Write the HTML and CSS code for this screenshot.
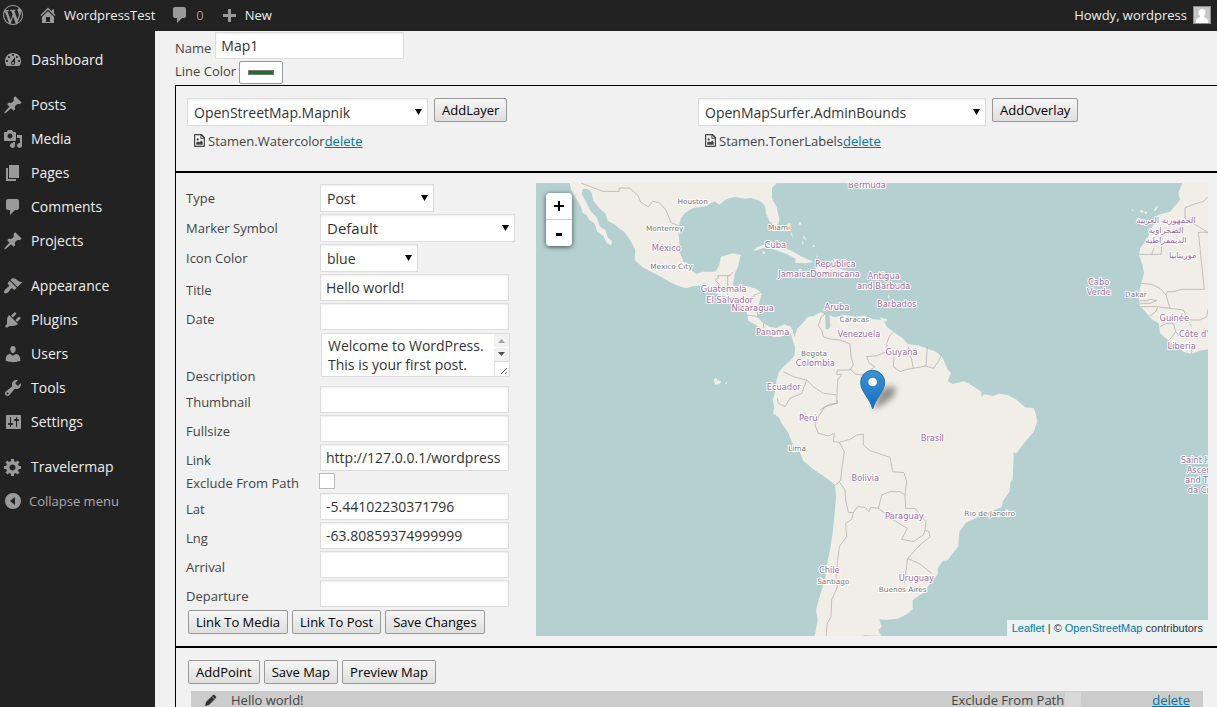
FILE: index.html
```html
<!DOCTYPE html>
<html lang="en">
<head>
<meta charset="utf-8">
<title>Travelermap - WordpressTest</title>
<link rel="stylesheet" href="styles.css">
</head>
<body>
<header class="adminbar">
  <a class="bar-item bar-logo" href="#" aria-label="About WordPress"><svg class="icon" viewBox="0 0 20 20"><path d="M20 10c0-5.51-4.49-10-10-10C4.48 0 0 4.49 0 10c0 5.52 4.48 10 10 10 5.51 0 10-4.48 10-10zM7.78 15.37L4.37 6.22c.55-.02 1.17-.08 1.17-.08.5-.06.44-1.13-.06-1.11 0 0-1.45.11-2.37.11-.18 0-.37 0-.58-.01C4.12 2.69 6.87 1.11 10 1.11c2.33 0 4.45.87 6.05 2.34-.68-.11-1.65.39-1.65 1.58 0 .74.45 1.36.9 2.1.35.61.55 1.36.55 2.46 0 1.49-1.4 5-1.4 5l-3.03-8.37c.54-.02.82-.17.82-.17.5-.05.44-1.25-.06-1.22 0 0-1.44.12-2.38.12-.87 0-2.33-.12-2.33-.12-.5-.03-.56 1.2-.06 1.22l.92.08 1.26 3.41zM17.41 10c.24-.64.74-1.87.43-4.25.7 1.29 1.05 2.71 1.05 4.25 0 3.29-1.73 6.24-4.4 7.78.97-2.59 1.94-5.2 2.92-7.78zM6.1 18.09C3.12 16.65 1.11 13.53 1.11 10c0-1.3.23-2.48.72-3.59C3.25 10.3 4.67 14.2 6.1 18.09zm4.03-6.63l2.58 6.98c-.86.29-1.76.45-2.71.45-.79 0-1.57-.11-2.29-.33.81-2.38 1.62-4.74 2.42-7.1z"/></svg></a>
  <a class="bar-item" href="#"><svg class="icon" viewBox="0 0 20 20"><path fill-rule="evenodd" d="M16 8.5l1.53 1.53-1.06 1.06L10 4.6l-6.47 6.49-1.06-1.06L10 2.5l4 4v-2h2v4zm-6-2.46l6 5.99V18H4v-5.97zM12 17v-5H8v5h4z"/></svg>WordpressTest</a>
  <a class="bar-item bar-muted" href="#"><svg class="icon" viewBox="0 0 20 20"><path d="M5 2h9c1.1 0 2 .9 2 2v7c0 1.1-.9 2-2 2h-2l-5 5v-5H5c-1.1 0-2-.9-2-2V4c0-1.1.9-2 2-2z"/></svg>0</a>
  <a class="bar-item" href="#"><svg class="icon" viewBox="0 0 20 20"><path d="M17 9v3h-5v5H9v-5H4V9h5V4h3v5h5z"/></svg>New</a>
  <a class="bar-item bar-user" href="#">Howdy, wordpress<svg class="avatar" viewBox="0 0 18 18"><rect width="18" height="18" fill="#8c8c8c"/><rect x="1" y="1" width="16" height="16" fill="#c6c6c6"/><path fill="#fff" d="M9 3c2.200 0 3.500 1.600 3.500 3.600 0 1.500-.7 2.700-1.500 3.500v1c1 .8 3.500 1.200 4 3.400V17H3v-2.500c.5-2.200 3-2.600 4-3.400v-1C6.200 9.300 5.500 8.100 5.500 6.600 5.500 4.600 6.800 3 9 3z"/></svg></a>
</header>

<div class="shell">
<nav class="menu" aria-label="Main menu">
  <ul class="menu-list">
    <li><a href="#"><svg class="icon" viewBox="0 0 20 20"><path fill-rule="evenodd" d="M3.760 16h12.480c1.100-1.370 1.760-3.110 1.760-5 0-4.420-3.580-8-8-8s-8 3.580-8 8c0 1.890.66 3.630 1.760 5zM10 4c.55 0 1 .45 1 1s-.45 1-1 1-1-.45-1-1 .45-1 1-1zM6 6c.55 0 1 .45 1 1s-.45 1-1 1-1-.45-1-1 .45-1 1-1zm8 0c.55 0 1 .45 1 1s-.45 1-1 1-1-.45-1-1 .45-1 1-1zm-5.370 5.550L12 7v6c0 1.100-.9 2-2 2s-2-.9-2-2c0-.57.24-1.080.63-1.450zM4 10c.55 0 1 .45 1 1s-.45 1-1 1-1-.45-1-1 .45-1 1-1zm12 0c.55 0 1 .45 1 1s-.45 1-1 1-1-.45-1-1 .45-1 1-1zm-5 3c0-.55-.45-1-1-1s-1 .45-1 1 .45 1 1 1 1-.45 1-1z"/></svg>Dashboard</a></li>
    <li class="group"><a href="#"><svg class="icon" viewBox="0 0 20 20"><path d="M10.440 3.020l1.820-1.820 6.360 6.350-1.830 1.820c-1.050-.68-2.480-.57-3.410.36l-.75.75c-.92.93-1.040 2.350-.35 3.410l-1.830 1.820-2.410-2.410-2.800 2.790c-.42.42-3.380 2.710-3.800 2.290s1.860-3.390 2.280-3.810l2.790-2.790L4.100 9.360l1.830-1.820c1.050.69 2.480.57 3.400-.36l.75-.75c.93-.92 1.050-2.350.36-3.410z"/></svg>Posts</a></li>
    <li><a href="#"><svg class="icon" viewBox="0 0 20 20"><path fill-rule="evenodd" d="M13 11V4c0-.55-.45-1-1-1h-1.670L9 1H5L3.670 3H2c-.55 0-1 .45-1 1v7c0 .55.45 1 1 1h10c.55 0 1-.45 1-1zM7 4.500c1.380 0 2.500 1.120 2.500 2.500S8.380 9.500 7 9.500 4.500 8.380 4.500 7 5.620 4.500 7 4.500zM14 6h5v10.500c0 1.380-1.120 2.500-2.500 2.500S14 17.880 14 16.500s1.120-2.500 2.500-2.500c.17 0 .34.020.5.050V9h-3V6zm-4 8.050V13h2v3.500c0 1.380-1.120 2.500-2.500 2.500S7 17.880 7 16.500 8.120 14 9.500 14c.17 0 .34.020.5.050z"/></svg>Media</a></li>
    <li><a href="#"><svg class="icon" viewBox="0 0 20 20"><path d="M6 15V2h10v13H6zm-1 1h8v2H3V5h2v11z"/></svg>Pages</a></li>
    <li><a href="#"><svg class="icon" viewBox="0 0 20 20"><path d="M5 2h9c1.100 0 2 .9 2 2v7c0 1.100-.9 2-2 2h-2l-5 5v-5H5c-1.100 0-2-.9-2-2V4c0-1.100.9-2 2-2z"/></svg>Comments</a></li>
    <li><a href="#"><svg class="icon" viewBox="0 0 20 20"><path d="M10.440 3.020l1.820-1.820 6.360 6.350-1.830 1.820c-1.050-.68-2.480-.57-3.410.36l-.75.75c-.92.93-1.040 2.350-.35 3.410l-1.830 1.820-2.410-2.410-2.800 2.790c-.42.42-3.380 2.710-3.800 2.290s1.860-3.390 2.280-3.810l2.790-2.790L4.100 9.360l1.830-1.820c1.050.69 2.480.57 3.400-.36l.75-.75c.93-.92 1.050-2.350.36-3.410z"/></svg>Projects</a></li>
    <li class="group"><a href="#"><svg class="icon" viewBox="0 0 20 20"><path d="M14.480 11.060L7.410 3.990l1.500-1.500c.5-.56 2.300-.47 3.510.32 1.210.8 1.430 1.280 2.910 2.100 1.180.64 2.450 1.260 4.450.85zm-.71.71L6.700 4.700 4.930 6.470c-.39.39-.39 1.020 0 1.410l1.060 1.060c.39.39.39 1.030 0 1.420-.6.6-1.430 1.110-2.210 1.690-.35.26-.7.53-1.010.84C1.430 14.230.4 16.080 1.400 17.070c.99 1 2.840-.03 4.180-1.360.31-.31.58-.66.85-1.020.57-.78 1.080-1.610 1.690-2.210.39-.39 1.020-.39 1.410 0l1.060 1.060c.39.39 1.020.39 1.410 0z"/></svg>Appearance</a></li>
    <li><a href="#"><svg class="icon" viewBox="0 0 20 20"><path d="M13.110 4.360L9.870 7.600 8 5.730l3.240-3.240c.35-.34 1.050-.2 1.560.32.52.51.66 1.210.31 1.550zm-8 1.770l.91-1.120 9.010 9.010-1.190.84c-.71.71-2.630 1.160-3.820 1.160H6.140L4.900 17.260c-.59.59-1.540.59-2.120 0-.59-.58-.59-1.530 0-2.120l1.240-1.240v-3.880c0-1.130.4-3.190 1.090-3.890zm7.260 3.970l3.240-3.240c.34-.35 1.040-.21 1.550.31.52.51.66 1.210.31 1.550l-3.240 3.250z"/></svg>Plugins</a></li>
    <li><a href="#"><svg class="icon" viewBox="0 0 20 20"><path d="M10 9.250c-2.270 0-2.730-3.440-2.730-3.440C7 4.020 7.820 2 9.970 2c2.160 0 2.980 2.020 2.710 3.810 0 0-.41 3.440-2.680 3.440zm0 2.570L12.720 10c2.390 0 4.520 2.330 4.520 4.530v2.490s-3.650 1.130-7.240 1.130c-3.650 0-7.240-1.130-7.240-1.130v-2.490c0-2.250 1.940-4.480 4.470-4.480z"/></svg>Users</a></li>
    <li><a href="#"><svg class="icon" viewBox="0 0 20 20"><path fill-rule="evenodd" d="M16.680 9.770c-1.340 1.340-3.300 1.670-4.950.99l-5.410 6.520c-.99.99-2.590.99-3.580 0s-.99-2.590 0-3.570l6.520-5.420c-.68-1.650-.35-3.610.99-4.950 1.280-1.280 3.120-1.620 4.720-1.060l-2.890 2.890 2.820 2.820 2.860-2.870c.53 1.580.18 3.390-1.080 4.650zM3.810 16.210c.4.39 1.040.39 1.430 0 .4-.4.4-1.040 0-1.430-.39-.4-1.030-.4-1.430 0-.39.39-.39 1.030 0 1.430z"/></svg>Tools</a></li>
    <li><a href="#"><svg class="icon" viewBox="0 0 20 20"><path fill-rule="evenodd" d="M18 16V4c0-.55-.45-1-1-1H4c-.55 0-1 .45-1 1v12c0 .55.45 1 1 1h13c.55 0 1-.45 1-1zM8 11h1c.55 0 1 .45 1 1s-.45 1-1 1H8v1.500c0 .28-.22.5-.5.5s-.5-.22-.5-.5V13H6c-.55 0-1-.45-1-1s.45-1 1-1h1V5.500c0-.28.22-.5.5-.5s.5.22.5.5V11zm5-2h-1c-.55 0-1-.45-1-1s.45-1 1-1h1V5.500c0-.28.22-.5.5-.5s.5.22.5.5V7h1c.55 0 1 .45 1 1s-.45 1-1 1h-1v5.500c0 .28-.22.5-.5.5s-.5-.22-.5-.5V9z"/></svg>Settings</a></li>
    <li class="group"><a href="#"><svg class="icon" viewBox="0 0 20 20"><path fill-rule="evenodd" d="M18 12h-2.180c-.17.7-.44 1.350-.81 1.930l1.540 1.540-2.100 2.100-1.540-1.540c-.58.36-1.230.63-1.910.79V19H8v-2.180c-.68-.16-1.330-.43-1.910-.79l-1.540 1.540-2.120-2.120 1.540-1.540c-.36-.58-.63-1.230-.79-1.910H1V9.030h2.170c.16-.7.44-1.350.8-1.940L2.430 5.550l2.100-2.100 1.540 1.540c.58-.37 1.240-.64 1.930-.81V2h3v2.180c.68.16 1.330.43 1.910.79l1.540-1.540 2.120 2.120-1.540 1.540c.36.59.64 1.240.8 1.940H18V12zm-8.500 1.500c1.660 0 3-1.340 3-3s-1.340-3-3-3-3 1.340-3 3 1.340 3 3 3z"/></svg>Travelermap</a></li>
  </ul>
  <button class="collapse" type="button"><svg class="icon" viewBox="0 0 20 20"><path fill-rule="evenodd" d="M10 2a8 8 0 1 0 0 16 8 8 0 0 0 0-16zM12 14V6l-5 4z"/></svg>Collapse menu</button>
</nav>

<main class="content">
  <div class="head-row"><label for="map-name">Name</label><input class="text" id="map-name" type="text" value="Map1"></div>
  <div class="head-row head-color"><label for="line-color">Line Color</label><input class="color" id="line-color" type="color" value="#147528"></div>

  <section class="panel layers">
    <div class="layer-col">
      <div class="layer-pick">
        <span class="pick pick-layer"><select aria-label="Layer"><option>OpenStreetMap.Mapnik</option></select></span>
        <button class="btn" type="button">AddLayer</button>
      </div>
      <div class="layer"><svg class="file" viewBox="0 0 12 14"><path fill="#444" fill-rule="evenodd" d="M1 0h7.500L12 3.500V13a1 1 0 0 1-1 1H1a1 1 0 0 1-1-1V1a1 1 0 0 1 1-1zm.3 1.300v11.400h9.400V5H7V1.300zM8 1.800V4h2.200z"/><path fill="#444" d="M2.500 11.500V9l2-1 1.500 1 2-2 1.500 1.500v3z"/><circle cx="4" cy="5.800" r="1.200" fill="#444"/></svg><span>Stamen.Watercolor</span><a href="#">delete</a></div>
    </div>
    <div class="layer-col">
      <div class="layer-pick">
        <span class="pick pick-overlay"><select aria-label="Overlay"><option>OpenMapSurfer.AdminBounds</option></select></span>
        <button class="btn" type="button">AddOverlay</button>
      </div>
      <div class="layer"><svg class="file" viewBox="0 0 12 14"><path fill="#444" fill-rule="evenodd" d="M1 0h7.500L12 3.500V13a1 1 0 0 1-1 1H1a1 1 0 0 1-1-1V1a1 1 0 0 1 1-1zm.3 1.300v11.400h9.400V5H7V1.300zM8 1.800V4h2.200z"/><path fill="#444" d="M2.500 11.500V9l2-1 1.500 1 2-2 1.500 1.500v3z"/><circle cx="4" cy="5.800" r="1.200" fill="#444"/></svg><span>Stamen.TonerLabels</span><a href="#">delete</a></div>
    </div>
  </section>

  <section class="panel editor">
    <form class="form">
      <div class="row row-select"><label for="f-type">Type</label><span class="pick pick-type"><select id="f-type"><option>Post</option></select></span></div>
      <div class="row row-select"><label for="f-symbol">Marker Symbol</label><span class="pick pick-symbol"><select id="f-symbol"><option>Default</option></select></span></div>
      <div class="row row-select"><label for="f-color">Icon Color</label><span class="pick pick-color"><select id="f-color"><option>blue</option></select></span></div>
      <div class="row"><label for="f-title">Title</label><input class="text" id="f-title" type="text" value="Hello world!"></div>
      <div class="row"><label for="f-date">Date</label><input class="text" id="f-date" type="text"></div>
      <div class="row row-area"><label for="f-desc">Description</label><span class="area"><textarea id="f-desc" rows="2">Welcome to WordPress. This is your first post.</textarea><svg class="scroller" viewBox="0 0 15 42"><rect width="15" height="42" fill="#f1f1f1"/><path d="M0 13.500h15" stroke="#fff"/><path fill="#a3a3a3" d="M4 9h7L7.500 5z"/><path fill="#505050" d="M4 18h7l-3.500 4z"/><rect y="27" width="15" height="15" fill="#fff"/><path d="M0 27.500h15M.5 27v15" stroke="#ddd"/><path d="M7 40l6-6M11 40l2-2" stroke="#666"/></svg></span></div>
      <div class="row"><label for="f-thumb">Thumbnail</label><input class="text" id="f-thumb" type="text"></div>
      <div class="row"><label for="f-full">Fullsize</label><input class="text" id="f-full" type="text"></div>
      <div class="row"><label for="f-link">Link</label><input class="text" id="f-link" type="text" value="http://127.0.0.1/wordpress"></div>
      <div class="row row-check"><label for="f-exclude">Exclude From Path</label><input class="check" id="f-exclude" type="checkbox"></div>
      <div class="row"><label for="f-lat">Lat</label><input class="text" id="f-lat" type="text" value="-5.44102230371796"></div>
      <div class="row"><label for="f-lng">Lng</label><input class="text" id="f-lng" type="text" value="-63.80859374999999"></div>
      <div class="row"><label for="f-arr">Arrival</label><input class="text" id="f-arr" type="text"></div>
      <div class="row"><label for="f-dep">Departure</label><input class="text" id="f-dep" type="text"></div>
      <div class="buttons"><button class="btn" type="button">Link To Media</button><button class="btn" type="button">Link To Post</button><button class="btn" type="button">Save Changes</button></div>
    </form>

    <div class="map">
      <svg class="map-canvas" viewBox="0 9 2016 1359" preserveAspectRatio="xMinYMin slice" role="img" aria-label="Map of Central and South America">
        <defs>
          <linearGradient id="pin" x1="0" y1="0" x2="0" y2="1"><stop offset="0" stop-color="#3f92cf"/><stop offset="1" stop-color="#126fc6"/></linearGradient>
          <filter id="soft" x="-50%" y="-50%" width="200%" height="200%"><feGaussianBlur stdDeviation="9"/></filter>
        </defs>
        <g class="land">
          <path d="M100 0L105 30 120 55 135 80 140 100 152 105 160 120 175 130 184 155 202 168 213 190 225 196 229 184 215 172 208 150 192 140 182 112 165 95 152 70 137 42 140 28 155 26 167 38 172 62 190 85 208 100 215 122 235 133 248 145 265 155 285 185 298 210 296 240 320 262 345 275 375 290 400 305 425 317 450 325 475 318 495 318 515 330 545 343 575 352 600 365 628 380 632 400 637 422 660 435 680 455 700 463 712 472 735 470 742 458 755 452 765 462 770 480 777 500 776 525 765 540 740 562 728 578 722 600 716 640 710 660 715 680 711 700 728 712 740 735 757 758 767 785 792 818 802 842 832 868 870 893 897 915 900 950 896 1000 890 1060 882 1110 874 1150 868 1195 852 1245 840 1290 845 1320 834 1380H990L982 1365 1035 1368 1027 1350 1037 1340 1030 1318 1050 1320 1085 1316 1112 1303 1130 1288 1130 1260 1160 1240 1188 1204 1202 1188 1217 1150 1235 1140 1267 1098 1270 1055 1290 1028 1312 1018 1362 995 1397 982 1400 965 1420 935 1424 905 1430 898 1432 850 1433 816 1440 821 1470 782 1492 757 1504 725 1499 700 1492 684 1467 682 1440 658 1415 645 1390 641 1370 648 1345 642 1336 652 1336 635 1302 613 1285 604 1250 612 1235 603 1245 580 1235 568 1218 530 1200 515 1150 497 1115 492 1100 475 1072 455 1052 440 1042 420 1010 418 985 407 960 410 925 405 895 412 880 405 882 425 878 440 868 432 868 405 855 396 835 407 815 411 800 430 785 445 777 465 765 440 745 433 720 444 700 440 680 428 665 412 662 400 668 375 678 338 660 326 632 318 600 320 590 315 597 278 606 260 612 235 615 225 590 220 555 230 550 255 538 275 500 275 480 282 463 268 443 245 431 218 430 180 425 148 435 115 448 98 470 85 510 78 535 64 550 74 570 58 598 50 625 56 645 54 672 62 687 78 690 100 700 122 715 136 727 132 730 118 722 82 708 55 708 25 722 9V0z"/>
          <path d="M1942 0L1927 40 1932 60 1902 95 1865 105 1845 150 1832 180 1812 205 1809 225 1818 250 1824 280 1815 312 1808 345 1812 378 1832 400 1847 418 1868 430 1872 460 1902 485 1942 515 1967 522 1990 512 2016 508V0z"/>
          <path d="M652 213L662 202 690 192 722 202 750 206 772 215 797 230 832 246 807 250 777 248 780 236 752 222 712 208 685 203 665 210z"/>
          <path d="M839 258L862 262 900 264 950 275 967 284 930 291 880 288 842 290zM1030 412L1052 418 1052 424 1040 424zM680 214l8 2-3 6-6-2z"/>
          <path d="M533 597l8-3 3 7 12 3-5 8-14 2zM569 607l4 0 0 5-4 0zM763 153l5 8 3 14-5-9zM777 140l5 10M800 165l8 8 3 10-8-8zM840 225l9 10-7-3zM1787 85l6 8-5 0zM1812 92l8-2 2 7-8 1zM1826 95l9 0-4 8-5-2zM1853 92l7-12 8-4-10 17zM1055 350l4-10 1 22z"/>
          <ellipse cx="792" cy="130" rx="3" ry="5"/><ellipse cx="833" cy="198" rx="3" ry="4"/><ellipse cx="800" cy="188" rx="2" ry="5"/>
        </g>
        <path class="water" d="M868 440l6-30 6 0 4 28-6 10-9-2zM1205 1165l16-22 7-2-10 18-12 20z"/>
        <g class="borders">
          <path d="M135 9L200 34H249L250 24H280L305 45 315 68 337 80 350 64 370 68 390 90 405 128 430 138"/>
          <path d="M575 345V287H545L548 293 537 300 555 318M575 287H582L590 276M642 360L655 345 678 337M632 405L655 408 668 412M682 430L684 445"/>
          <path d="M867 402L855 412 847 437 857 450 862 470 882 477 912 480 942 492 945 530 952 555 942 570 904 570 902 583 917 583 905 600 902 670 882 672 852 690M942 565L957 582 977 585 1000 572 1017 560 1000 550 992 530 1022 527 1052 515V490L1062 465 1074 455M1074 530L1072 560 1092 575 1112 568 1132 565 1127 540 1117 500M1132 565L1170 558 1172 525 1174 500M1170 558L1192 565 1207 545 1217 522"/>
          <path d="M742 575L772 590 812 600 832 620 862 640 902 645M812 600L797 640 762 655 747 680 727 670 724 655M904 660V670L867 680 847 710 837 735 847 760 877 768 895 760 892 785 910 787 942 778 962 765 982 763V795L1002 812 1062 832 1070 875 1104 878 1112 905 1107 945"/>
          <path d="M772 455l5 14M910 787L925 815 917 870 914 900 900 915M910 905L927 930 929 960 937 997 952 998 964 980 987 982 999 995 1004 982 1027 985 1037 945 1062 935 1092 935 1107 945 1109 985 1137 985 1152 1005 1170 1025 1167 1050 1162 1065 1132 1085 1097 1078 1114 1045 1072 1020 1027 985M1167 1050L1179 1055 1182 1070 1152 1095 1115 1135 1105 1210M1115 1135L1152 1152 1187 1180"/>
          <path d="M952 998L947 1018 929 1030 932 1070 910 1100 904 1150 900 1200 904 1220 887 1260 885 1310 874 1330 870 1368"/>
          <path d="M2016 50L2002 65 1982 70 1947 83V115L2016 157H1987L2005 328H1937L1914 335H1894L1890 345 1872 325 1847 313 1814 310M1809 223H1876L1877 195M1847 223L1854 205M1890 345L1902 385 1862 380H1814M1812 362H1832L1842 358 1862 362 1842 370H1814M1902 385L1942 390 1952 410 1962 420H1992L2012 410 2016 388M1842 408L1862 392 1864 382M1872 440L1892 430H1912L1919 455 1902 478M1952 415L1967 440M1919 455L1930 470M1967 522V500L1957 490"/>
        </g>
        <g class="towns">
          <text x="470" y="72">Houston</text><text x="386" y="152">Monterrey</text><text x="406" y="267">Mexico City</text><text x="729" y="150">Miami</text><text x="955" y="425">Caracas</text><text x="834" y="527">Bogota</text><text x="1800" y="351">Dakar</text><text x="783" y="813">Lima</text><text x="1361" y="1008">Rio de Janeiro</text><text x="892" y="1212">Santiago</text><text x="1100" y="1236">Buenos Aires</text>
        </g>
        <g class="countries">
          <text x="391" y="212">México</text><text x="563" y="336">Guatemala</text><text x="581" y="368">El Salvador</text><text x="650" y="394">Nicaragua</text><text x="993" y="24">Bermuda</text><text x="718" y="203">Cuba</text><text x="898" y="260">República</text><text x="776" y="291">Jamaica</text><text x="897" y="291">Dominicana</text><text x="1043" y="296">Antigua</text><text x="1043" y="326">and Barbuda</text><text x="1082" y="380">Barbados</text><text x="903" y="391">Aruba</text><text x="969" y="470">Venezuela</text><text x="710" y="464">Panama</text><text x="838" y="557">Colombia</text><text x="1097" y="524">Guyana</text><text x="743" y="629">Ecuador</text><text x="817" y="724">Perú</text><text x="1189" y="784">Brasil</text><text x="988" y="903">Bolivia</text><text x="1105" y="1017">Paraguay</text><text x="880" y="1178">Chile</text><text x="1141" y="1202">Uruguay</text><text x="1688" y="316">Cabo</text><text x="1688" y="345">Verde</text><text x="1915" y="422">Guinée</text><text x="1937" y="508">Liberia</text>
          <text x="1890" y="128">الجمهورية العربية</text><text x="1890" y="158">الصحراوية</text><text x="1890" y="188">الديمقراطية</text><text x="1940" y="233">موريتانيا</text>
          <g class="from-left"><text x="1929" y="470">Côte d'Ivoire</text><text x="1934" y="850">Saint Helena</text><text x="1952" y="880">Ascension</text><text x="1947" y="910">and Tristan</text><text x="1955" y="940">da Cunha</text></g>
        </g>
        <path filter="url(#soft)" opacity=".4" d="M1010 688L1030 640C1045 615 1085 610 1078 635 1070 660 1030 680 1010 688z"/>
        <path fill="url(#pin)" stroke="#2a6da8" stroke-width="3" d="M1010 687C1002 655 974 635 974 607A36 36 0 0 1 1046 607C1046 635 1018 655 1010 687z"/>
        <circle cx="1010" cy="606" r="13" fill="#fff"/>
      </svg>
      <div class="zoom"><button type="button" aria-label="Zoom in"><svg viewBox="0 0 26 26"><path d="M8 13h10M13 8v10" stroke="#000" stroke-width="2"/></svg></button><button type="button" aria-label="Zoom out"><svg viewBox="0 0 26 26"><path d="M10 14.500h6" stroke="#000" stroke-width="3"/></svg></button></div>
      <div class="credit"><a href="#">Leaflet</a> | © <a href="#">OpenStreetMap</a> contributors</div>
    </div>
  </section>

  <section class="panel points">
    <div class="buttons"><button class="btn" type="button">AddPoint</button><button class="btn" type="button">Save Map</button><button class="btn" type="button">Preview Map</button></div>
    <div class="point">
      <svg class="pencil" viewBox="0 0 12 12"><path fill="#333" d="M0 12l1-4 7-7c1-1 4 2 3 3l-7 7z"/><path d="M7 2.500L9.500 5" stroke="#ccc" stroke-width=".7"/></svg>
      <span class="point-name">Hello world!</span>
      <label for="p-exclude">Exclude From Path</label><input class="point-check" id="p-exclude" type="checkbox" disabled>
      <a href="#">delete</a>
    </div>
  </section>
</main>
</div>
</body>
</html>
```
FILE: styles.css
```css
* { box-sizing: border-box; }
html { scrollbar-width: none; }
body {
  margin: 0;
  background: #f1f1f1;
  color: #444;
  font: 13px/18px "Open Sans", "Noto Sans", sans-serif;
}
input, select, textarea, button { font-family: inherit; margin: 0; }
a { color: #0074a2; }
svg { display: block; flex: none; }

.adminbar {
  display: flex;
  align-items: center;
  height: 31px;
  padding: 0 6px 1px 3px;
  gap: 15px;
  background: #222;
}
.bar-item {
  display: flex;
  align-items: center;
  gap: 6px;
  color: #eee;
  text-decoration: none;
}
.bar-muted { color: #999; }
.bar-user { margin-left: auto; }
.icon { width: 20px; height: 20px; fill: #999; }
.avatar { width: 18px; height: 18px; }

.shell { display: flex; min-height: calc(100vh - 31px); }
.menu { flex: none; width: 155px; padding-top: 12px; background: #222; }
.menu-list { margin: 0; padding: 0; list-style: none; }
.menu-list a, .collapse {
  display: flex;
  align-items: center;
  gap: 8px;
  height: 34px;
  padding: 0 3px;
  color: #eee;
  font-size: 14px;
  text-decoration: none;
}
.group { margin-top: 11px; }
.collapse { gap: 6px; border: 0; background: none; color: #aaa; font-size: 13px; }

.content { flex: 1; min-width: 0; padding-left: 20px; }
.head-row { display: flex; align-items: center; gap: 4px; padding-top: 1px; }
.head-row label { padding-top: 4px; }
.head-color { gap: 3px; padding: 2px 0 1px; }
.head-color label { padding: 0 0 4px; }

.text {
  width: 189px;
  height: 27px;
  padding: 0 5px 1px;
  border: 1px solid #ddd;
  background: #fff;
  box-shadow: inset 0 1px 2px rgba(0, 0, 0, .07);
  color: #333;
  font-size: 14px;
}
.color {
  width: 44px;
  height: 23px;
  padding: 8px;
  border: 1px solid #999;
  border-radius: 2px;
  background: #fff;
}
.color::-webkit-color-swatch-wrapper { padding: 0; }
.color::-webkit-color-swatch { border: 1px solid #777; border-radius: 0; }

.pick { position: relative; display: block; }
.pick select {
  display: block;
  width: 100%;
  height: 28px;
  padding: 0 6px;
  border: 1px solid #ddd;
  border-radius: 0;
  background: #fff;
  box-shadow: inset 0 1px 2px rgba(0, 0, 0, .07);
  color: #333;
  font-size: 14px;
  appearance: none;
}
.pick::after {
  content: "";
  position: absolute;
  top: 11px;
  right: 6px;
  width: 7px;
  height: 6px;
  background: #000;
  clip-path: polygon(0 0, 100% 0, 50% 100%);
  pointer-events: none;
}
.pick-layer { width: 241px; }
.pick-overlay { width: 288px; }
.pick-type { width: 114px; }
.pick-symbol { width: 195px; }
.pick-symbol select { font-size: 15px; }
.pick-color { width: 98px; }

.btn {
  height: 24px;
  padding: 0 7px;
  border: 1px solid #999;
  border-radius: 2px;
  background: linear-gradient(#f6f6f6, #dedede);
  color: #000;
  font-size: 13px;
  line-height: 20px;
}
.buttons { display: flex; gap: 4px; padding: 2px; }

.panel { border: solid #000; border-width: 1px 0 1px 1px; }
.layers { display: grid; grid-template-columns: 1fr 1fr; padding: 12px 8px 17px 11px; }
.layer-pick { display: flex; gap: 6px; }
.layer { display: flex; align-items: center; height: 25px; margin: 2px 0 1px; padding-left: 7px; }
.file { width: 11px; height: 13px; margin-right: 3px; }

.editor { display: flex; gap: 27px; padding: 10px 9px 10px 10px; }
.form { flex: none; width: 323px; }
.row {
  display: grid;
  grid-template-columns: 134px 1fr;
  align-items: center;
  height: 29px;
}
.row label { padding-top: 5px; }
.row-select { height: 30px; }
.row-select label { padding-top: 0; }
.row-area { height: 54px; padding: 1px 0 0; align-items: end; }
.row-area .area { align-self: start; }
.row-check { height: 20px; align-items: start; }
.row-check label { padding-top: 2px; }
.area { position: relative; display: block; width: 189px; margin: 1px 0 0 1px; }
.area textarea {
  display: block;
  width: 100%;
  height: 44px;
  padding: 2px 18px 2px 6px;
  border: 1px solid #ddd;
  background: #fff;
  color: #333;
  font-size: 14px;
  line-height: 19px;
  overflow: hidden;
  resize: none;
}
.scroller { position: absolute; top: 1px; right: 1px; width: 15px; height: 42px; }
.check {
  width: 16px;
  height: 16px;
  margin: 1px 0 0 -1px;
  border: 1px solid #bbb;
  background: #fff;
  appearance: none;
}

.map { position: relative; flex: 1; min-width: 0; overflow: hidden; background: #b5d0d0; }
.map-canvas { position: absolute; width: 100%; height: 100%; }
.land { fill: #f1eee8; }
.water { fill: #b5d0d0; }
.borders { fill: none; stroke: #aaa7a3; stroke-width: 2; }
.map-canvas text {
  font-family: "DejaVu Sans", sans-serif;
  text-anchor: middle;
  paint-order: stroke;
  stroke: #fff;
  stroke-width: 6px;
  stroke-linejoin: round;
}
.towns text { fill: #777; font-size: 22px; }
.countries text { fill: #9d6ba3; font-size: 25px; }
.map-canvas .from-left text { text-anchor: start; }
.zoom {
  position: absolute;
  top: 10px;
  left: 10px;
  border-radius: 4px;
  overflow: hidden;
  box-shadow: 0 1px 5px rgba(0, 0, 0, .65);
}
.zoom button { display: block; width: 26px; height: 26px; padding: 0; border: 0; background: #fff; }
.zoom button + button { height: 27px; border-top: 1px solid #ccc; }
.zoom svg { width: 26px; height: 26px; }
.credit {
  position: absolute;
  right: 0;
  bottom: 0;
  padding: 0 5px;
  background: rgba(255, 255, 255, .75);
  color: #333;
  font: 11px/16px "Liberation Sans", sans-serif;
}
.credit a { color: #0078a8; text-decoration: none; }

.points { padding: 10px 14px 0 10px; border-bottom: 0; }
.point {
  display: flex;
  align-items: center;
  margin: 5px 0 0 5px;
  padding: 0 13px 0 14px;
  background: #ccc;
}
.pencil { width: 12px; height: 12px; margin-right: 14px; }
.point-name { flex: 1; }
.point-check { width: 16px; height: 16px; margin: 0 71px 0 1px; background: #d8d8d8; appearance: none; }
```
